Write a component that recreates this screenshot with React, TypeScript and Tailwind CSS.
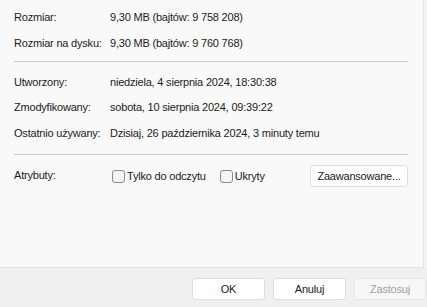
import React from "react";

const Row = ({ label, value, h }: { label: string; value: string; h: string }) => (
  <div className={"flex items-center whitespace-nowrap " + h}>
    <div className="w-[96px] shrink-0">{label}</div>
    <div>{value}</div>
  </div>
);

const Check = ({ label }: { label: string }) => (
  <label className="flex items-center gap-[2px]">
    <span className="w-[13px] h-[13px] rounded-[3px] border border-[#8a8a8a] bg-[#f5f5f5]" />
    <span>{label}</span>
  </label>
);

export default function App() {
  return (
    <div
      className="w-[427px] h-[307px] bg-[#f0f0f0] flex flex-col text-[11px] tracking-[-0.2px] text-[#1b1b1b] overflow-hidden"
      style={{ fontFamily: '"Liberation Sans", Arial, sans-serif' }}
    >
      <div className="flex h-[268px] shrink-0">
        <div className="w-[424px] bg-[#f9f9f9] border-r border-b border-[#e3e3e3] pl-[14px] pr-[14px] pt-[4px]">
          <Row h="h-[26px]" label="Rozmiar:" value="9,30 MB (bajtów: 9 758 208)" />
          <Row h="h-[26px]" label="Rozmiar na dysku:" value="9,30 MB (bajtów: 9 760 768)" />
          <div className="h-px bg-[#cfcfcf] mt-[5px] mb-[7px] mr-[1px]" />
          <Row h="h-[26px]" label="Utworzony:" value="niedziela, 4 sierpnia 2024, 18:30:38" />
          <Row h="h-[25px]" label="Zmodyfikowany:" value="sobota, 10 sierpnia 2024, 09:39:22" />
          <Row h="h-[26px]" label="Ostatnio używany:" value="Dzisiaj, 26 października 2024, 3 minuty temu" />
          <div className="h-px bg-[#cfcfcf] mt-[8px] mr-[1px]" />
          <div className="flex items-center h-[34px] mt-[4px] whitespace-nowrap">
            <div className="w-[98px] shrink-0 -mt-[2px]">Atrybuty:</div>
            <Check label="Tylko do odczytu" />
            <div className="w-[14px]" />
            <Check label="Ukryty" />
            <button className="ml-auto mr-[1px] h-[22px] w-[98px] bg-white border border-[#e0e0e0] rounded-[3px]">
              Zaawansowane...
            </button>
          </div>
        </div>
        <div className="flex-1 bg-[#f3f3f3]" />
      </div>
      <div className="flex justify-end gap-[8px] pt-[10px] pr-[1px]">
        <button className="w-[73px] h-[22px] bg-white border border-[#dedede] rounded-[3px]">OK</button>
        <button className="w-[73px] h-[22px] bg-white border border-[#dedede] rounded-[3px]">Anuluj</button>
        <button className="w-[72px] h-[22px] bg-[#f7f7f7] border border-[#e8e8e8] rounded-[3px] text-[#a0a0a0]">Zastosuj</button>
      </div>
    </div>
  );
}
